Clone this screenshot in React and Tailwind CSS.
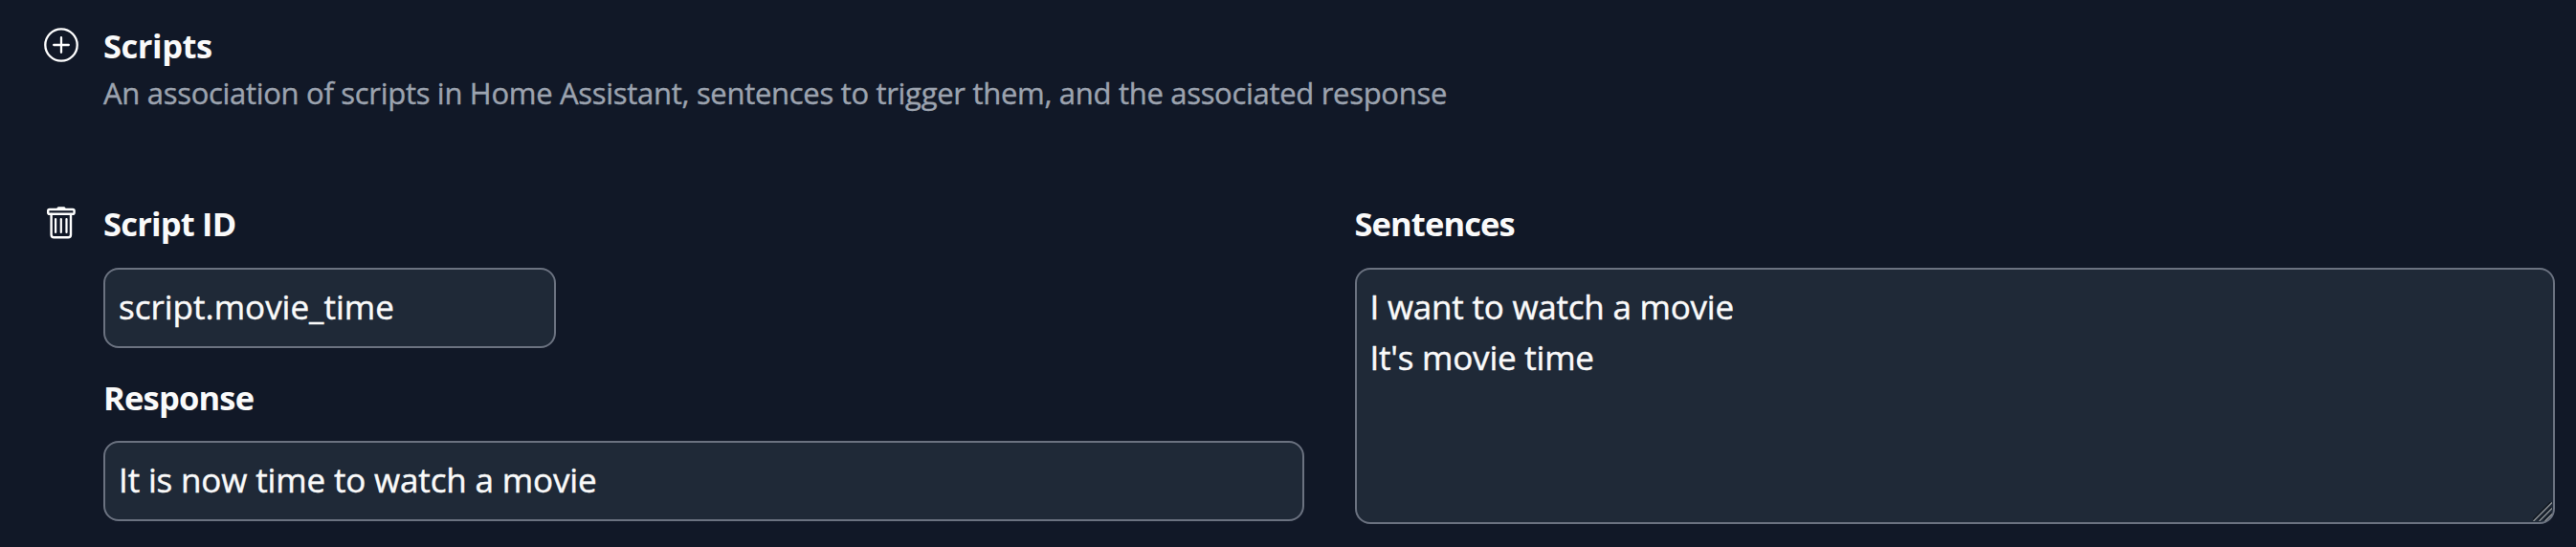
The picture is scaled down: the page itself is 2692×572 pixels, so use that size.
import React from 'react';

const label = "block pt-px text-[34.5px] leading-[54px] font-bold whitespace-nowrap";
const field =
  "block rounded-2xl border-2 border-[#6b7280] bg-[#1f2937] text-[35px] text-[#fafafa] outline-none [-webkit-text-stroke:0.45px]";

function PlusCircleIcon() {
  return (
    <svg className="block size-9" viewBox="0 0 36 36" fill="none" stroke="currentColor" strokeWidth="2.3" strokeLinecap="round">
      <circle cx="18" cy="18" r="16.7" />
      <path d="M18 10.2v15.6M10.2 18h15.6" />
    </svg>
  );
}

function TrashIcon() {
  return (
    <svg className="block h-[35px] w-[30px]" viewBox="0 0 30 35" fill="none" stroke="currentColor" strokeWidth="2.4" strokeLinecap="round" strokeLinejoin="round">
      <path d="M9.5 3 11.6 0.2h6.8L20.5 3z" fill="currentColor" stroke="none" />
      <rect x="1.2" y="3" width="27.4" height="4.8" rx="1.6" />
      <path d="M4.6 8v21.4a2.8 2.8 0 0 0 2.8 2.8h14.8a2.8 2.8 0 0 0 2.8-2.8V8" />
      <path d="M9.1 13v14M14.8 13v14M20.5 13v14" strokeWidth="2.2" />
    </svg>
  );
}

function ResizeGrip() {
  return (
    <svg className="pointer-events-none absolute right-[3px] bottom-[3px] size-5" viewBox="0 0 20 20" fill="none">
      <path d="M0 18.5 18.5 0M5.5 19 19 5.5M11.5 19 19 11.5" stroke="#111820" strokeWidth="1.6" />
      <path d="M0.5 20 20 0.5M6.5 20 20 6.5M12.5 20 20 12.5" stroke="#8d9194" strokeWidth="1.4" />
    </svg>
  );
}

export default function App() {
  return (
    <div className="h-[572px] w-full overflow-hidden bg-[#111827] pt-5 pr-[22px] font-['Open_Sans',sans-serif] text-[#fafafa]">
      <header className="flex">
        <button className="h-[45px] w-[108px] shrink-0 pt-[9px] pl-[46px] text-white" aria-label="Add script">
          <PlusCircleIcon />
        </button>
        <div>
          <h2 className={label + " tracking-[-0.45px]"}>Scripts</h2>
          <p className="text-[31px] leading-[44px] tracking-[-0.3px] whitespace-nowrap text-[#9ca3af] [-webkit-text-stroke:0.4px]">
            An association of scripts in Home Assistant, sentences to trigger them, and the associated response
          </p>
        </div>
      </header>

      <section className="mt-[87px] flex">
        <button className="h-[45px] w-[108px] shrink-0 pt-[10px] pl-[49px] text-white" aria-label="Delete script">
          <TrashIcon />
        </button>
        <div className="grid flex-1 grid-cols-2 gap-x-[53px]">
          <div>
            <label htmlFor="script-id" className={label + " tracking-[-0.8px]"}>Script ID</label>
            <input
              id="script-id"
              className={field + " mt-[19px] h-[84px] w-[473px] px-[14px] pb-[3px]"}
              defaultValue="script.movie_time"
            />
            <label htmlFor="response" className={label + " mt-6 tracking-[-0.8px]"}>Response</label>
            <input
              id="response"
              className={field + " mt-[18px] h-[84px] w-full px-[14px] pb-[3px] tracking-[-0.15px]"}
              defaultValue="It is now time to watch a movie"
            />
          </div>
          <div>
            <label htmlFor="sentences" className={label + " tracking-[-0.9px]"}>Sentences</label>
            <div className="relative mt-[19px]">
              <textarea
                id="sentences"
                className={field + " h-[268px] w-full resize-none px-[14px] py-3 leading-[53px] tracking-[-0.22px]"}
                defaultValue={"I want to watch a movie\nIt's movie time"}
              />
              <ResizeGrip />
            </div>
          </div>
        </div>
      </section>
    </div>
  );
}
